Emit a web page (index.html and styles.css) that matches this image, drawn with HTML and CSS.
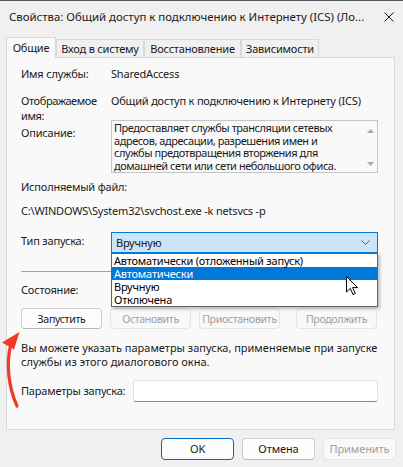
FILE: index.html
```html
<!DOCTYPE html>
<html lang="ru">
<head>
<meta charset="utf-8">
<title>Свойства</title>
<link rel="stylesheet" href="styles.css">
</head>
<body>
<div class="window">
  <div class="titlebar">
    <span class="title">Свойства: Общий доступ к подключению к Интернету (ICS) (Ло...</span>
    <svg class="close" width="10" height="10" viewBox="0 0 10 10"><path d="M0.5 0.5 L9.5 9.5 M9.5 0.5 L0.5 9.5" stroke="#1a1a1a" stroke-width="1" fill="none"/></svg>
  </div>
  <div class="tabs">
    <div class="tab active t1">Общие</div>
    <div class="tab t2">Вход в систему</div>
    <div class="tab t3">Восстановление</div>
    <div class="tab t4">Зависимости</div>
  </div>
  <div class="panel">
    <div class="row row-name"><span class="lbl">Имя службы:</span><span class="val">SharedAccess</span></div>
    <div class="row row-display"><span class="lbl lbl-two">Отображаемое<br>имя:</span><span class="val">Общий доступ к подключению к Интернету (ICS)</span></div>
    <div class="row row-desc">
      <span class="lbl lbl-desc">Описание:</span>
      <div class="descbox">
        <div class="desctext">Предоставляет службы трансляции сетевых<br>адресов, адресации, разрешения имен и<br>службы предотвращения вторжения для<br>домашней сети или сети небольшого офиса.</div>
        <div class="scroll">
          <svg width="7" height="4" viewBox="0 0 7 4"><path d="M0 4 L3.5 0 L7 4 Z" fill="#a8a8a8"/></svg>
          <svg width="7" height="4" viewBox="0 0 7 4"><path d="M0 0 L3.5 4 L7 0 Z" fill="#a8a8a8"/></svg>
        </div>
      </div>
    </div>
    <div class="line line-exe">Исполняемый файл:</div>
    <div class="line line-path">C:\WINDOWS\System32\svchost.exe -k netsvcs -p</div>
    <div class="row row-type">
      <span class="lbl lbl-type">Тип запуска:</span>
      <div class="combo">
        <span>Вручную</span>
        <svg class="chev" width="9" height="5" viewBox="0 0 9 5"><path d="M0.5 0.5 L4.5 4.5 L8.5 0.5" stroke="#555" stroke-width="1" fill="none"/></svg>
        <ul class="dropdown">
          <li>Автоматически (отложенный запуск)</li>
          <li class="sel">Автоматически</li>
          <li>Вручную</li>
          <li>Отключена</li>
        </ul>
      </div>
    </div>
    <div class="sep"></div>
    <div class="line line-state">Состояние:</div>
    <div class="btnrow">
      <button class="btn">Запустить</button>
      <button class="btn dis">Остановить</button>
      <button class="btn dis">Приостановить</button>
      <button class="btn dis last">Продолжить</button>
    </div>
    <p class="note">Вы можете указать параметры запуска, применяемые при запуске<br>службы из этого диалогового окна.</p>
    <div class="row row-params">
      <span class="lbl lbl-params">Параметры запуска:</span>
      <div class="input"></div>
    </div>
  </div>
  <div class="footer">
    <button class="btn fbtn ok">OK</button>
    <button class="btn fbtn">Отмена</button>
    <button class="btn fbtn dis">Применить</button>
  </div>
</div>
<svg class="cursor" width="13" height="20" viewBox="0 0 13 20"><path d="M0.5 0.5 L0.5 16 L4.3 12.4 L7 18.6 L9.3 17.6 L6.6 11.6 L11.6 11.6 Z" fill="#fff" stroke="#000" stroke-width="1" stroke-linejoin="miter"/></svg>
<svg class="redarrow" width="30" height="90" viewBox="0 320 30 90"><path d="M17 406 C 8 386, 6 362, 11 344" stroke="#f23b26" stroke-width="3.2" fill="none" stroke-linecap="round"/><path d="M19.5 332 L2 342.5 L14 349.5 Z" fill="#f23b26"/></svg>
</body>
</html>
```

FILE: styles.css
```css
* { box-sizing: border-box; }
html, body { margin: 0; padding: 0; }
body {
  width: 403px;
  height: 467px;
  background: #f0f0f0;
  font-family: "Noto Sans", "Liberation Sans", sans-serif;
  font-size: 11px;
  letter-spacing: -0.2px;
  color: #1a1a1a;
  position: relative;
  overflow: hidden;
}
.window { display: flex; flex-direction: column; }
.titlebar {
  height: 32px;
  display: flex;
  align-items: center;
  justify-content: space-between;
  padding: 0 9px 0 9px;
  border-top: 1px solid #5a5a5a;
}
.title { white-space: nowrap; color: #1a1a1a; font-size: 11.4px; letter-spacing: 0; }
.close { margin-top: 1px; }
.tabs {
  display: flex;
  align-items: flex-end;
  height: 20px;
  margin-top: 5px;
  padding-left: 6px;
  position: relative;
  z-index: 2;
}
.tab {
  height: 18px;
  line-height: 17px;
  text-align: center;
  border: 1px solid #d9d9d9;
  border-bottom: none;
  background: #f0f0f0;
  white-space: nowrap;
}
.t1 { width: 50px; }
.t2 { width: 88px; }
.t3 { width: 97px; }
.t4 { width: 78px; }
.tab.active {
  height: 21px;
  margin-bottom: -1px;
  line-height: 19px;
  background: #f9f9f9;
  position: relative;
  z-index: 3;
}
.panel {
  margin: 0 8px 0 6px;
  height: 373px;
  border: 1px solid #d9d9d9;
  background: #f9f9f9;
  padding: 0 16px 0 14px;
  display: flex;
  flex-direction: column;
  line-height: 16px;
}
.row { display: flex; align-items: flex-start; }
.lbl { width: 90px; flex: none; white-space: nowrap; }
.val { white-space: nowrap; }
.row-name { margin-top: 8px; }
.row-display { margin-top: 11px; }
.lbl-two { line-height: 15px; letter-spacing: -0.4px; }
.row-desc { margin-top: -3px; }
.lbl-desc { margin-top: 5px; }
.descbox {
  width: 267px;
  height: 53px;
  border: 1px solid #c4c4c4;
  background: #f9f9f9;
  display: flex;
  padding: 1px 0 0 2px;
  overflow: hidden;
}
.desctext { width: 250px; line-height: 12.7px; white-space: nowrap; letter-spacing: -0.45px; }
.scroll {
  flex: 1;
  display: flex;
  flex-direction: column;
  justify-content: space-between;
  align-items: center;
  padding: 7px 0 6px 0;
}
.scroll svg { display: block; }
.line { white-space: nowrap; }
.line-exe { margin-top: 6px; }
.line-path { margin-top: 8px; }
.row-type { margin-top: 13px; }
.lbl-type { margin-top: 1px; }
.combo {
  position: relative;
  width: 267px;
  height: 21px;
  border: 1px solid #0078d7;
  background: #cce4f7;
  line-height: 19px;
  padding-left: 4px;
  display: flex;
  justify-content: space-between;
  align-items: center;
}
.chev { margin-right: 7px; }
.dropdown {
  position: absolute;
  left: -1px;
  top: 20px;
  width: 267px;
  margin: 0;
  padding: 0;
  list-style: none;
  border: 1px solid #646464;
  background: #fff;
  box-shadow: 2px 2px 3px rgba(0,0,0,0.25);
  z-index: 5;
}
.dropdown li {
  height: 13px;
  line-height: 13px;
  padding-left: 2px;
  white-space: nowrap;
  color: #000;
}
.dropdown li.sel { background: #0078d7; color: #fff; }
.sep { margin-top: 18px; height: 1px; background: #a0a0a0; }
.line-state { margin-top: 10px; }
.btnrow { margin-top: 10px; display: flex; gap: 8px; }
.btn {
  font: inherit;
  letter-spacing: -0.3px;
  height: 21px;
  width: 81px;
  padding: 0;
  border: 1px solid #d0d0d0;
  border-bottom-color: #b8b8b8;
  border-radius: 4px;
  background: #fdfdfd;
  color: #1a1a1a;
  line-height: 18px;
  white-space: nowrap;
  overflow: visible;
}
.btnrow .btn { font-size: 10.6px; letter-spacing: -0.35px; }
.btn.dis { color: #a0a0a0; background: #f9f9f9; border-color: #e5e5e5; }
.btn.last { margin-left: 8px; }
.note { margin: 12px 0 0; line-height: 14px; white-space: nowrap; letter-spacing: 0; }
.row-params { margin-top: 11px; }
.lbl-params { width: 112px; margin-top: 3px; }
.input {
  width: 245px;
  height: 22px;
  background: #fff;
  border: 1px solid #e3e3e3;
  border-bottom-color: #868686;
  border-radius: 3px;
}
.footer {
  display: flex;
  justify-content: flex-end;
  gap: 8px;
  margin-top: 8px;
  padding-right: 7px;
}
.fbtn { width: 73px; height: 22px; letter-spacing: -0.1px; }
.btn.ok { border: 1px solid #0067c0; }
.cursor { position: absolute; left: 346px; top: 276px; z-index: 10; }
.redarrow { position: absolute; left: 0; top: 320px; z-index: 10; }
```
